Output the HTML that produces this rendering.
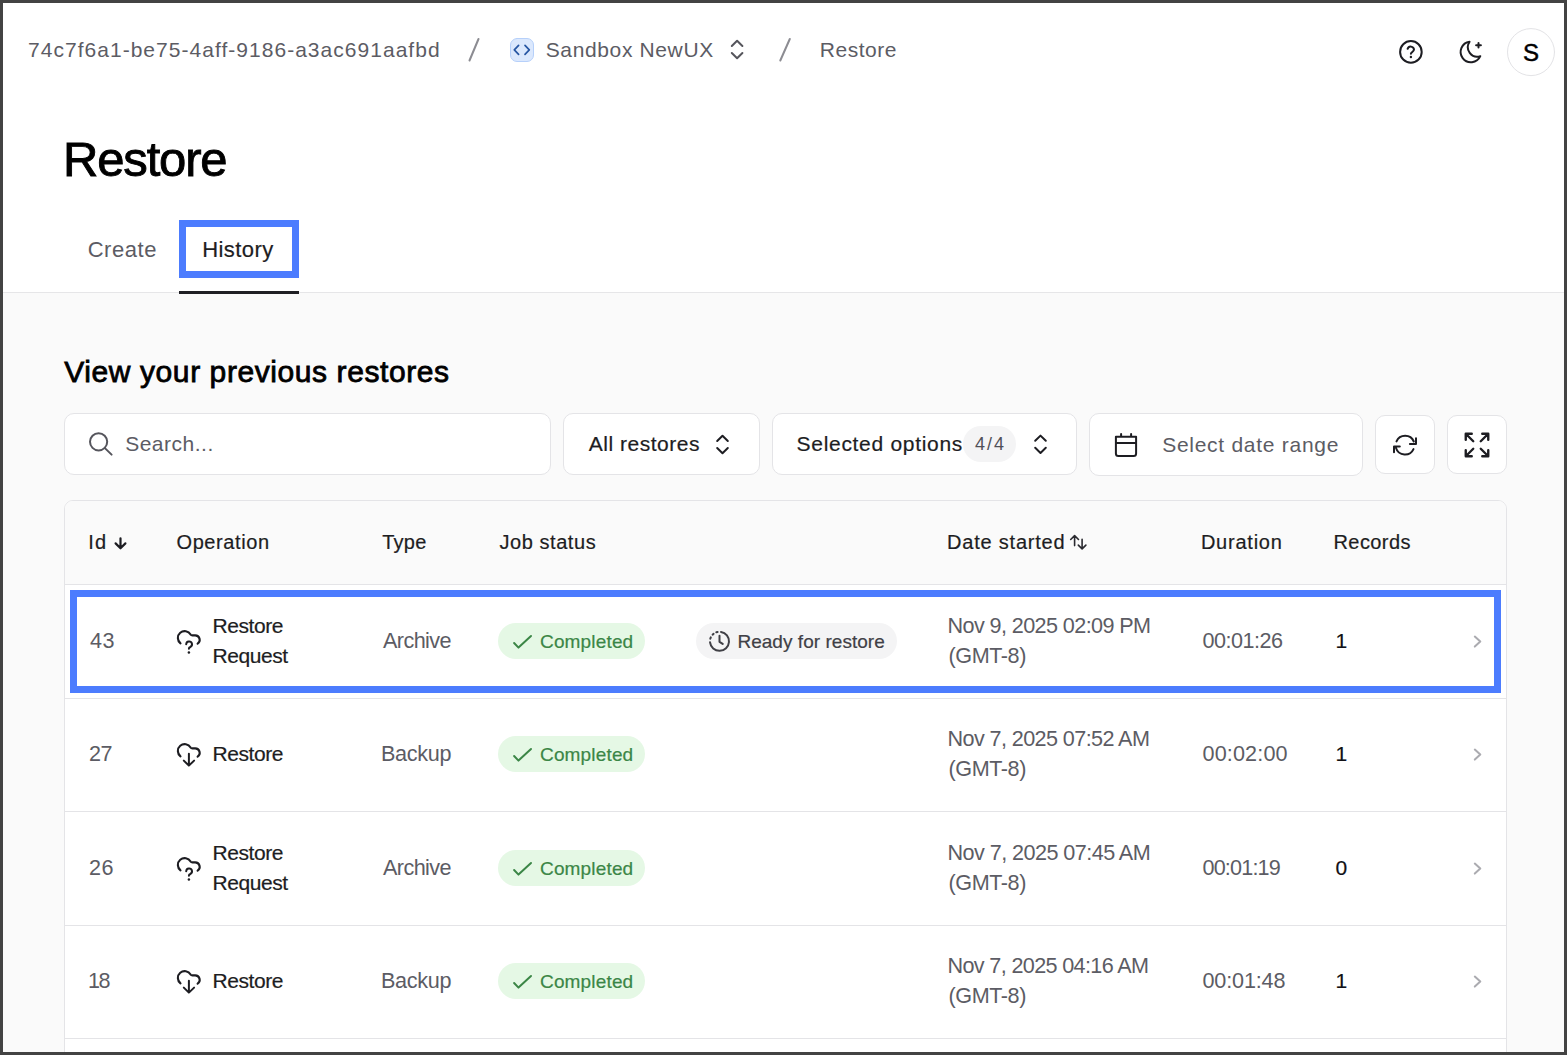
<!DOCTYPE html>
<html><head><meta charset="utf-8">
<style>
html,body{margin:0;padding:0;}
body{width:1567px;height:1055px;position:relative;overflow:hidden;background:#434343;font-family:"Liberation Sans",sans-serif;}
.t{position:absolute;white-space:nowrap;line-height:1;}
.bx{position:absolute;box-sizing:border-box;}
</style></head><body>
<div class="bx" style="left:3px;top:3px;width:1561px;height:1049px;background:#fafafa"></div>
<div class="bx" style="left:3px;top:3px;width:1561px;height:289px;background:#fff"></div>
<div class="bx" style="left:3px;top:292px;width:1561px;height:1px;background:#e6e6e8"></div>
<div class="bx" style="left:179px;top:291px;width:120px;height:3px;background:#1f1f24"></div>
<div class="bx" style="left:179px;top:220px;width:120px;height:58px;border:7px solid #4c7cfe"></div>
<div class="bx" style="left:64px;top:413px;width:487px;height:62px;border-radius:10px;background:#fff;border:1px solid #e4e4e7"></div><div class="bx" style="left:563px;top:413px;width:197px;height:62px;border-radius:10px;background:#fff;border:1px solid #e4e4e7"></div><div class="bx" style="left:772px;top:413px;width:305px;height:62px;border-radius:10px;background:#fff;border:1px solid #e4e4e7"></div><div class="bx" style="left:963px;top:425.5px;width:53px;height:36px;border-radius:18px;background:#f4f4f5"></div><div class="bx" style="left:1089px;top:413px;width:274px;height:63px;border-radius:10px;background:#fff;border:1px solid #e4e4e7"></div><div class="bx" style="left:1375px;top:415px;width:60px;height:59px;border-radius:10px;background:#fff;border:1px solid #e4e4e7"></div><div class="bx" style="left:1447px;top:415px;width:60px;height:59px;border-radius:10px;background:#fff;border:1px solid #e4e4e7"></div>
<div class="bx" style="left:64px;top:500px;width:1443px;height:600px;border-radius:9px;background:#fff;border:1px solid #e4e4e7;overflow:hidden">
<div style="position:absolute;left:0;top:0;width:100%;height:83px;background:#fafafa"></div>
<div style="position:absolute;left:0;top:83.0px;width:100%;height:1px;background:#e4e4e7"></div><div style="position:absolute;left:0;top:197.0px;width:100%;height:1px;background:#e4e4e7"></div><div style="position:absolute;left:0;top:310.0px;width:100%;height:1px;background:#e4e4e7"></div><div style="position:absolute;left:0;top:424.0px;width:100%;height:1px;background:#e4e4e7"></div><div style="position:absolute;left:0;top:537.0px;width:100%;height:1px;background:#e4e4e7"></div></div>
<div class="bx" style="left:70px;top:590px;width:1431px;height:103px;border:7px solid #4c7cfe"></div>
<div class="bx" style="left:498px;top:623.0px;width:147px;height:36px;border-radius:18px;background:#e5f8e5"></div><div class="bx" style="left:696px;top:623.0px;width:201px;height:36px;border-radius:18px;background:#f4f4f5"></div><div class="bx" style="left:498px;top:736.0px;width:147px;height:36px;border-radius:18px;background:#e5f8e5"></div><div class="bx" style="left:498px;top:850.0px;width:147px;height:36px;border-radius:18px;background:#e5f8e5"></div><div class="bx" style="left:498px;top:963.0px;width:147px;height:36px;border-radius:18px;background:#e5f8e5"></div>
<div class="t" style="left:28.00px;top:39.00px;font-size:21px;font-weight:400;color:#5c5c64;letter-spacing:1.029px">74c7f6a1-be75-4aff-9186-a3ac691aafbd</div>
<div class="t" style="left:545.70px;top:39.40px;font-size:21px;font-weight:400;color:#5c5c64;letter-spacing:0.633px">Sandbox NewUX</div>
<div class="t" style="left:819.70px;top:39.40px;font-size:21px;font-weight:400;color:#5c5c64;letter-spacing:0.550px">Restore</div>
<div class="t" style="left:1523.00px;top:41.00px;font-size:24px;font-weight:400;color:#000;letter-spacing:0.000px;-webkit-text-stroke:0.5px #000">S</div>
<div class="t" style="left:63.00px;top:135.20px;font-size:49px;font-weight:400;color:#000;letter-spacing:-1.167px;-webkit-text-stroke:0.9px #000">Restore</div>
<div class="t" style="left:87.70px;top:239.20px;font-size:22px;font-weight:400;color:#5c5c64;letter-spacing:0.540px">Create</div>
<div class="t" style="left:202.20px;top:239.20px;font-size:22px;font-weight:400;color:#1d1d22;letter-spacing:0.433px;-webkit-text-stroke:0.2px #1d1d22">History</div>
<div class="t" style="left:64.30px;top:356.60px;font-size:30px;font-weight:400;color:#000;letter-spacing:0.581px;-webkit-text-stroke:0.8px #000">View your previous restores</div>
<div class="t" style="left:125.20px;top:433.00px;font-size:21px;font-weight:400;color:#5c5c64;letter-spacing:0.500px">Search...</div>
<div class="t" style="left:588.70px;top:433.00px;font-size:21px;font-weight:400;color:#1d1d22;letter-spacing:0.527px;-webkit-text-stroke:0.2px #1d1d22">All restores</div>
<div class="t" style="left:796.60px;top:433.00px;font-size:21px;font-weight:400;color:#1d1d22;letter-spacing:0.693px;-webkit-text-stroke:0.2px #1d1d22">Selected options</div>
<div class="t" style="left:975.00px;top:435.00px;font-size:18px;font-weight:400;color:#505058;letter-spacing:2.000px">4/4</div>
<div class="t" style="left:1162.20px;top:434.00px;font-size:21px;font-weight:400;color:#5c5c64;letter-spacing:0.725px">Select date range</div>
<div class="t" style="left:88.20px;top:531.90px;font-size:20px;font-weight:400;color:#1d1d22;letter-spacing:1.300px;-webkit-text-stroke:0.2px #1d1d22">Id</div>
<div class="t" style="left:176.50px;top:531.90px;font-size:20px;font-weight:400;color:#1d1d22;letter-spacing:0.587px;-webkit-text-stroke:0.2px #1d1d22">Operation</div>
<div class="t" style="left:382.30px;top:531.90px;font-size:20px;font-weight:400;color:#1d1d22;letter-spacing:0.200px;-webkit-text-stroke:0.2px #1d1d22">Type</div>
<div class="t" style="left:499.40px;top:531.90px;font-size:20px;font-weight:400;color:#1d1d22;letter-spacing:0.567px;-webkit-text-stroke:0.2px #1d1d22">Job status</div>
<div class="t" style="left:947.10px;top:531.90px;font-size:20px;font-weight:400;color:#1d1d22;letter-spacing:0.782px;-webkit-text-stroke:0.2px #1d1d22">Date started</div>
<div class="t" style="left:1200.90px;top:531.90px;font-size:20px;font-weight:400;color:#1d1d22;letter-spacing:0.771px;-webkit-text-stroke:0.2px #1d1d22">Duration</div>
<div class="t" style="left:1333.50px;top:531.90px;font-size:20px;font-weight:400;color:#1d1d22;letter-spacing:0.417px;-webkit-text-stroke:0.2px #1d1d22">Records</div>
<div class="t" style="left:90.10px;top:629.90px;font-size:21.6px;font-weight:400;color:#5c5c64;letter-spacing:0.300px">43</div>
<div class="t" style="left:212.50px;top:614.80px;font-size:21px;font-weight:400;color:#1d1d22;letter-spacing:-0.433px;-webkit-text-stroke:0.2px #1d1d22">Restore</div>
<div class="t" style="left:212.50px;top:644.80px;font-size:21px;font-weight:400;color:#1d1d22;letter-spacing:-0.450px;-webkit-text-stroke:0.2px #1d1d22">Request</div>
<div class="t" style="left:383.00px;top:629.90px;font-size:21.6px;font-weight:400;color:#5c5c64;letter-spacing:-0.583px">Archive</div>
<div class="t" style="left:540.00px;top:631.90px;font-size:19px;font-weight:400;color:#3b8646;letter-spacing:0.162px;-webkit-text-stroke:0.2px #3b8646">Completed</div>
<div class="t" style="left:737.40px;top:631.90px;font-size:19px;font-weight:400;color:#404046;letter-spacing:0.038px;-webkit-text-stroke:0.2px #404046">Ready for restore</div>
<div class="t" style="left:947.50px;top:614.80px;font-size:21.6px;font-weight:400;color:#5c5c64;letter-spacing:-0.595px">Nov 9, 2025 02:09 PM</div>
<div class="t" style="left:948.50px;top:644.80px;font-size:21.6px;font-weight:400;color:#5c5c64;letter-spacing:-0.417px">(GMT-8)</div>
<div class="t" style="left:1202.50px;top:629.90px;font-size:21.6px;font-weight:400;color:#5c5c64;letter-spacing:-0.500px">00:01:26</div>
<div class="t" style="left:1335.40px;top:629.90px;font-size:21px;font-weight:400;color:#111115;letter-spacing:0.000px;-webkit-text-stroke:0.2px #111115">1</div>
<div class="t" style="left:89.10px;top:742.90px;font-size:21.6px;font-weight:400;color:#5c5c64;letter-spacing:-0.500px">27</div>
<div class="t" style="left:212.50px;top:742.90px;font-size:21px;font-weight:400;color:#1d1d22;letter-spacing:-0.433px;-webkit-text-stroke:0.2px #1d1d22">Restore</div>
<div class="t" style="left:381.00px;top:742.90px;font-size:21.6px;font-weight:400;color:#5c5c64;letter-spacing:-0.300px">Backup</div>
<div class="t" style="left:540.00px;top:744.90px;font-size:19px;font-weight:400;color:#3b8646;letter-spacing:0.162px;-webkit-text-stroke:0.2px #3b8646">Completed</div>
<div class="t" style="left:947.50px;top:727.80px;font-size:21.6px;font-weight:400;color:#5c5c64;letter-spacing:-0.595px">Nov 7, 2025 07:52 AM</div>
<div class="t" style="left:948.50px;top:757.80px;font-size:21.6px;font-weight:400;color:#5c5c64;letter-spacing:-0.417px">(GMT-8)</div>
<div class="t" style="left:1202.50px;top:742.90px;font-size:21.6px;font-weight:400;color:#5c5c64;letter-spacing:0.143px">00:02:00</div>
<div class="t" style="left:1335.40px;top:742.90px;font-size:21px;font-weight:400;color:#111115;letter-spacing:0.000px;-webkit-text-stroke:0.2px #111115">1</div>
<div class="t" style="left:89.10px;top:856.90px;font-size:21.6px;font-weight:400;color:#5c5c64;letter-spacing:0.400px">26</div>
<div class="t" style="left:212.50px;top:841.80px;font-size:21px;font-weight:400;color:#1d1d22;letter-spacing:-0.433px;-webkit-text-stroke:0.2px #1d1d22">Restore</div>
<div class="t" style="left:212.50px;top:871.80px;font-size:21px;font-weight:400;color:#1d1d22;letter-spacing:-0.450px;-webkit-text-stroke:0.2px #1d1d22">Request</div>
<div class="t" style="left:383.00px;top:856.90px;font-size:21.6px;font-weight:400;color:#5c5c64;letter-spacing:-0.583px">Archive</div>
<div class="t" style="left:540.00px;top:858.90px;font-size:19px;font-weight:400;color:#3b8646;letter-spacing:0.162px;-webkit-text-stroke:0.2px #3b8646">Completed</div>
<div class="t" style="left:947.50px;top:841.80px;font-size:21.6px;font-weight:400;color:#5c5c64;letter-spacing:-0.553px">Nov 7, 2025 07:45 AM</div>
<div class="t" style="left:948.50px;top:871.80px;font-size:21.6px;font-weight:400;color:#5c5c64;letter-spacing:-0.417px">(GMT-8)</div>
<div class="t" style="left:1202.50px;top:856.90px;font-size:21.6px;font-weight:400;color:#5c5c64;letter-spacing:-0.829px">00:01:19</div>
<div class="t" style="left:1335.40px;top:856.90px;font-size:21px;font-weight:400;color:#111115;letter-spacing:0.000px;-webkit-text-stroke:0.2px #111115">0</div>
<div class="t" style="left:88.10px;top:969.90px;font-size:21.6px;font-weight:400;color:#5c5c64;letter-spacing:-1.600px">18</div>
<div class="t" style="left:212.50px;top:969.90px;font-size:21px;font-weight:400;color:#1d1d22;letter-spacing:-0.433px;-webkit-text-stroke:0.2px #1d1d22">Restore</div>
<div class="t" style="left:381.00px;top:969.90px;font-size:21.6px;font-weight:400;color:#5c5c64;letter-spacing:-0.300px">Backup</div>
<div class="t" style="left:540.00px;top:971.90px;font-size:19px;font-weight:400;color:#3b8646;letter-spacing:0.162px;-webkit-text-stroke:0.2px #3b8646">Completed</div>
<div class="t" style="left:947.50px;top:954.80px;font-size:21.6px;font-weight:400;color:#5c5c64;letter-spacing:-0.642px">Nov 7, 2025 04:16 AM</div>
<div class="t" style="left:948.50px;top:984.80px;font-size:21.6px;font-weight:400;color:#5c5c64;letter-spacing:-0.417px">(GMT-8)</div>
<div class="t" style="left:1202.50px;top:969.90px;font-size:21.6px;font-weight:400;color:#5c5c64;letter-spacing:-0.157px">00:01:48</div>
<div class="t" style="left:1335.40px;top:969.90px;font-size:21px;font-weight:400;color:#111115;letter-spacing:0.000px;-webkit-text-stroke:0.2px #111115">1</div>

<svg width="1567" height="1055" style="position:absolute;left:0;top:0" fill="none" stroke="#1d1d22" stroke-width="2" stroke-linecap="round" stroke-linejoin="round"><path d="M469.5 60.5 L478.5 39" stroke="#8c8c92" stroke-width="2"/>
<path d="M780.3 60.5 L789.8 39" stroke="#8c8c92" stroke-width="2"/>
<rect x="510.5" y="38.5" width="23" height="23" rx="6.5" fill="#dbe8fd" stroke="#b6d0fa" stroke-width="1"/>
<path d="M518.6 45.4 L514.3 49.9 L518.6 54.4 M525 45.4 L529.3 49.9 L525 54.4" stroke="#2656a3" stroke-width="1.7"/>
<path stroke="#55555c" d="M731.8000000000001 46.0 L737.1 40.8 L742.4 46.0 M731.8000000000001 53.0 L737.1 58.2 L742.4 53.0"/>
<circle cx="1410.9" cy="51.9" r="10.8"/>
<path d="M1407.6 48.8 A3.3 3.3 0 0 1 1414 49.6 C1414 51.6 1410.9 52.2 1410.9 53.8"/><circle cx="1410.9" cy="57" r="1.2" fill="#1d1d22" stroke="none"/>
<path d="M1469.6 41.8 A10.27 10.27 0 1 0 1480.3 56.2 A9.45 9.45 0 0 1 1469.6 41.8 Z"/>
<path d="M1478.5 42.9 V47.6 M1476.1 45.25 H1480.9"/>
<circle cx="1531" cy="52.1" r="23.5" fill="none" stroke="#e3e3e6" stroke-width="1"/>
<circle cx="98.6" cy="441.8" r="8.6" stroke="#55555c"/><path d="M104.9 448.1 L111.6 454.6" stroke="#55555c"/>
<path d="M717.2 441.0 L722.5 435.8 L727.8 441.0 M717.2 448.0 L722.5 453.2 L727.8 448.0"/>
<path d="M1035.2 440.8 L1040.5 435.6 L1045.8 440.8 M1035.2 447.8 L1040.5 453.0 L1045.8 447.8"/>
<path d="M1115.9 436.7 H1136.1 V453.4 A2.5 2.5 0 0 1 1133.6 455.9 H1118.4 A2.5 2.5 0 0 1 1115.9 453.4 Z M1115.9 443 H1136.1 M1121.1 434.1 V436.7 M1131.1 434.1 V436.7"/>
<path d="M1396.5 441.4 A9.4 9.4 0 0 1 1413.8 441.5 M1416 438.3 V444 H1409.9 M1413.5 449.1 A9.4 9.4 0 0 1 1396 448 M1399.8 446.4 H1394 V452.2"/>
<g transform="translate(1462 430) scale(1.25)" stroke-width="1.9"><path d="m21 21-6-6m6 6v-4.8m0 4.8h-4.8"/><path d="M3 16.2V21m0 0h4.8M3 21l6-6"/><path d="M21 7.8V3m0 0h-4.8M21 3l-6 6"/><path d="M3 7.8V3m0 0h4.8M3 3l6 6"/></g>
<path d="M120.5 538.3 V548.3 M115.6 543.4 L120.5 548.3 L125.4 543.4" stroke-width="2.2"/>
<path d="M1074.6 535.6 V545.6 M1070.7 539.5 L1074.6 535.6 L1078.5 539.5 M1082.1 539.3 V548.8 M1078.3 545.1 L1082.1 548.9 L1085.9 545.1" stroke-width="1.6" stroke="#2a2a30"/>
<path transform="translate(172 625.0)" d="M8.5 18.3 A6.8 6.8 0 1 1 18.6 9.6 Q19.3 10.4 20.3 10.4 H23.2 A4.5 4.5 0 0 1 25.6 18.7" stroke-width="2.1"/><path transform="translate(172 625.0)" d="M14.2 19.2 A2.9 2.9 0 1 1 18.3 22 Q16.9 22.6 16.9 23.8"/><circle cx="188.9" cy="652.4" r="1.25" fill="#1d1d22" stroke="none"/>
<path d="M514.1 643.0 L518.5 647.6 L531.0 636.0" stroke="#3b8646" stroke-width="2"/>
<path d="M1474.8 636.6 L1480.3 641.6 L1474.8 646.6" stroke="#ababb0" stroke-width="2"/>
<g stroke="#404046" stroke-width="2"><path d="M721.0 631.9 A9.5 9.5 0 1 1 710.05 642.3"/><path d="M710.3 638.6999999999999 L710.8 637.4 M712.6 634.6999999999999 L713.6 633.8 M716.3 632.3 L717.6 632.0"/><path d="M719.5 635.8 V641.8 L722.7 643.9"/></g>
<path transform="translate(172 738.0)" d="M8.5 18.3 A6.8 6.8 0 1 1 18.6 9.6 Q19.3 10.4 20.3 10.4 H23.2 A4.5 4.5 0 0 1 25.6 18.7" stroke-width="2.1"/><path transform="translate(172 738.0)" d="M16.9 15.8 V27.4 M11.8 22.6 L16.9 27.6 L22.1 22.6"/>
<path d="M514.1 756.0 L518.5 760.6 L531.0 749.0" stroke="#3b8646" stroke-width="2"/>
<path d="M1474.8 749.6 L1480.3 754.6 L1474.8 759.6" stroke="#ababb0" stroke-width="2"/>
<path transform="translate(172 852.0)" d="M8.5 18.3 A6.8 6.8 0 1 1 18.6 9.6 Q19.3 10.4 20.3 10.4 H23.2 A4.5 4.5 0 0 1 25.6 18.7" stroke-width="2.1"/><path transform="translate(172 852.0)" d="M14.2 19.2 A2.9 2.9 0 1 1 18.3 22 Q16.9 22.6 16.9 23.8"/><circle cx="188.9" cy="879.4" r="1.25" fill="#1d1d22" stroke="none"/>
<path d="M514.1 870.0 L518.5 874.6 L531.0 863.0" stroke="#3b8646" stroke-width="2"/>
<path d="M1474.8 863.6 L1480.3 868.6 L1474.8 873.6" stroke="#ababb0" stroke-width="2"/>
<path transform="translate(172 965.0)" d="M8.5 18.3 A6.8 6.8 0 1 1 18.6 9.6 Q19.3 10.4 20.3 10.4 H23.2 A4.5 4.5 0 0 1 25.6 18.7" stroke-width="2.1"/><path transform="translate(172 965.0)" d="M16.9 15.8 V27.4 M11.8 22.6 L16.9 27.6 L22.1 22.6"/>
<path d="M514.1 983.0 L518.5 987.6 L531.0 976.0" stroke="#3b8646" stroke-width="2"/>
<path d="M1474.8 976.6 L1480.3 981.6 L1474.8 986.6" stroke="#ababb0" stroke-width="2"/></svg>
<div class="bx" style="left:0;top:0;width:1567px;height:3px;background:#434343"></div>
<div class="bx" style="left:0;top:1052px;width:1567px;height:3px;background:#434343"></div>
<div class="bx" style="left:0;top:0;width:3px;height:1055px;background:#434343"></div>
<div class="bx" style="left:1564px;top:0;width:3px;height:1055px;background:#434343"></div>
</body></html>
